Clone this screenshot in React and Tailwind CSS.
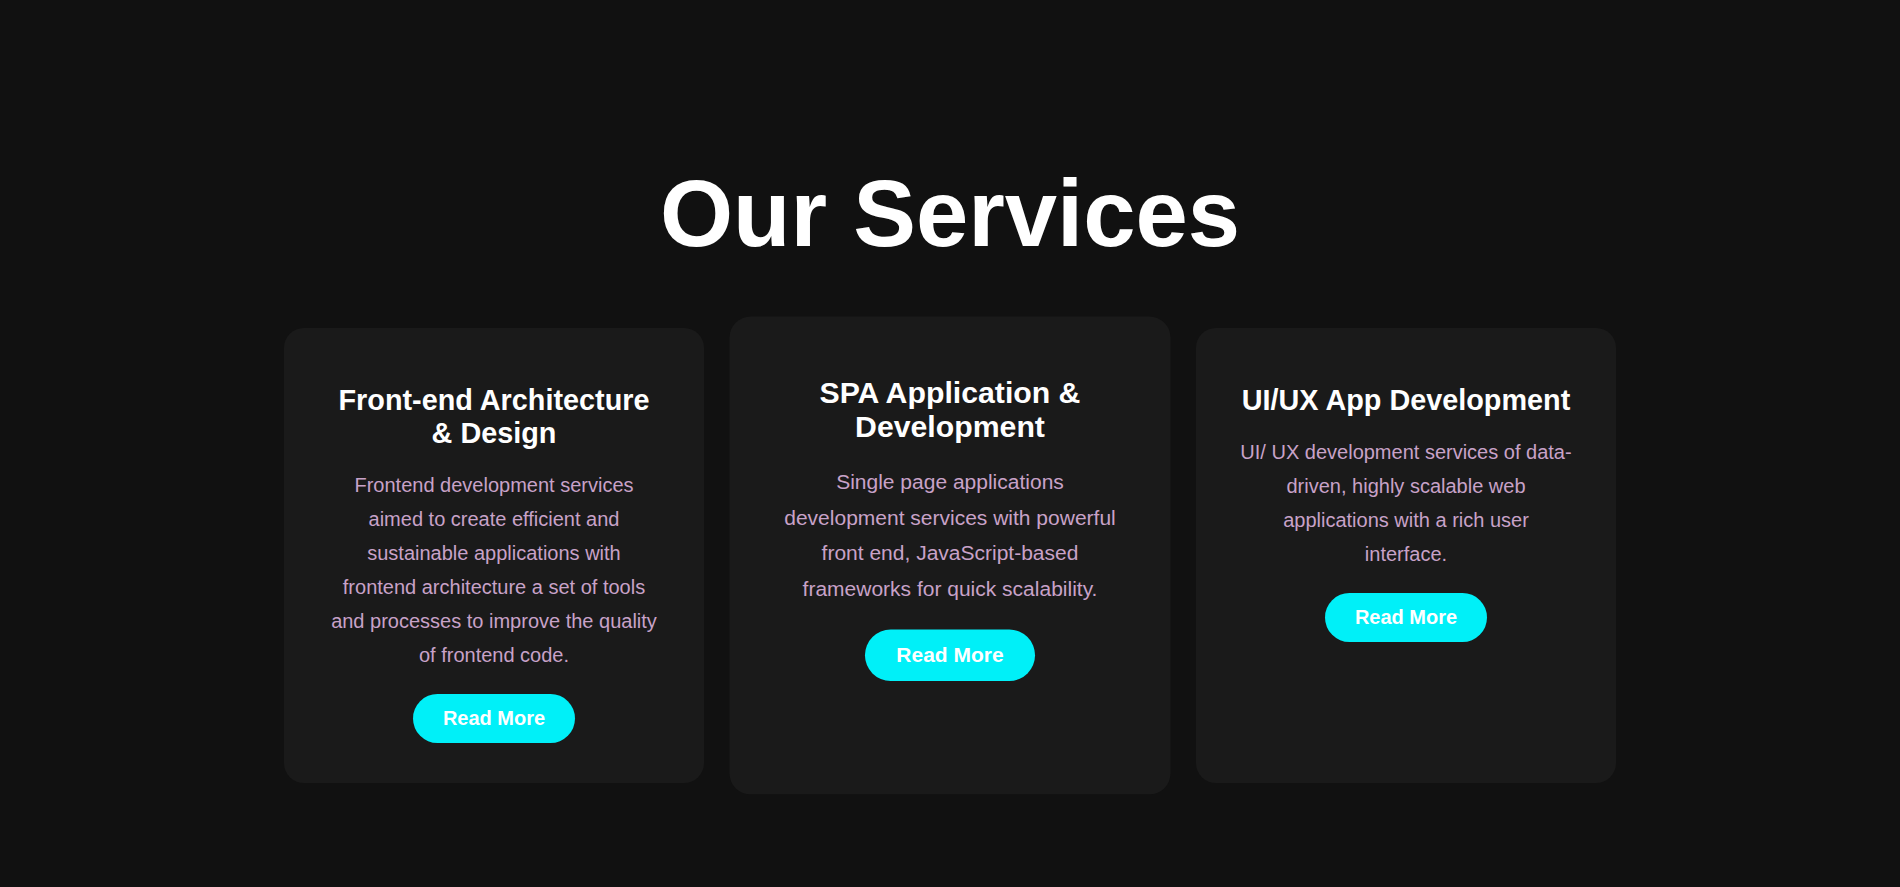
const services = [
  {
    title: "Front-end Architecture & Design",
    text: "Frontend development services aimed to create efficient and sustainable applications with frontend architecture a set of tools and processes to improve the quality of frontend code.",
  },
  {
    title: "SPA Application & Development",
    text: "Single page applications development services with powerful front end, JavaScript-based frameworks for quick scalability.",
    active: true,
  },
  {
    title: "UI/UX App Development",
    text: "UI/ UX development services of data-driven, highly scalable web applications with a rich user interface.",
  },
];

const ServiceCard = ({ title, text, active }) => (
  <div
    className={`flex flex-col items-center text-center bg-[#1a1a1a] rounded-[20px] px-[44px] pt-[56px] pb-10 ${
      active ? "scale-105" : ""
    }`}
  >
    <h3 className="text-[28.8px] font-bold text-white leading-[1.149] mb-[18px]">{title}</h3>
    <p className="text-[20px] leading-[34px] text-[#c8a2c8] mb-[22px]">{text}</p>
    <button className="bg-[#00f0f8] text-white text-[20px] font-bold leading-[23px] px-[30px] py-[13px] rounded-full">
      Read More
    </button>
  </div>
);

const App = () => {
  return (
    <div className="min-h-screen bg-[#111111] font-['Liberation_Sans',Arial,sans-serif]">
      <section className="flex flex-col items-center pt-[160px] pb-[100px]">
        <h2 className="text-[94px] font-bold text-white leading-[108px] mb-[60px]">Our Services</h2>
        <div className="grid grid-cols-3 gap-9 w-[1332px]">
          {services.map((s) => (
            <ServiceCard key={s.title} {...s} />
          ))}
        </div>
      </section>
    </div>
  );
};

export default App;
